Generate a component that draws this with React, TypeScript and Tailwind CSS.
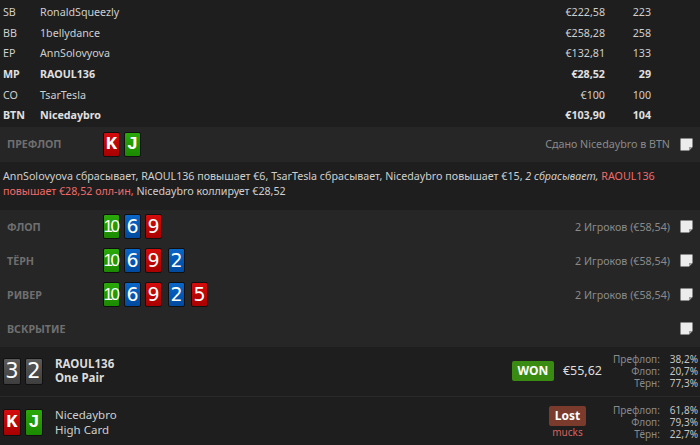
import React from "react";

type CardColor = "red" | "green" | "blue" | "gray";

const cardBg: Record<CardColor, string> = {
  red: "bg-gradient-to-b from-[#d40c0c] to-[#a80000]",
  green: "bg-gradient-to-b from-[#2aa80a] to-[#1b8a00]",
  blue: "bg-gradient-to-b from-[#0a66c8] to-[#004a9e]",
  gray: "bg-gradient-to-b from-[#5a5a5a] to-[#3e3e3e]",
};

const players = [
  { pos: "SB", name: "RonaldSqueezly", amount: "€222,58", bb: "223" },
  { pos: "BB", name: "1bellydance", amount: "€258,28", bb: "258" },
  { pos: "EP", name: "AnnSolovyova", amount: "€132,81", bb: "133" },
  { pos: "MP", name: "RAOUL136", amount: "€28,52", bb: "29", bold: true },
  { pos: "CO", name: "TsarTesla", amount: "€100", bb: "100" },
  { pos: "BTN", name: "Nicedaybro", amount: "€103,90", bb: "104", bold: true },
];

const Card = ({
  rank,
  color,
  big,
}: {
  rank: string;
  color: CardColor;
  big?: boolean;
}) => {
  const isLetter = /[A-Z]/.test(rank);
  return (
    <div
      className={`flex items-center justify-center rounded-[2px] border border-[#101010] text-white ${cardBg[color]} ${
        big ? "h-[27px] w-[18px]" : "h-[25px] w-[17px]"
      }`}
    >
      {isLetter ? (
        <span className="font-['Liberation_Mono',monospace] text-[19px] font-bold leading-none">
          {rank}
        </span>
      ) : rank === "10" ? (
        <span className="font-['Liberation_Sans',sans-serif] text-[17px] leading-none tracking-[-2.5px] -ml-[2px]">
          {rank}
        </span>
      ) : (
        <span
          className={`font-['DejaVu_Sans',sans-serif] leading-none ${
            big ? "text-[21px]" : "text-[19px]"
          }`}
        >
          {rank}
        </span>
      )}
    </div>
  );
};

const Check = () => (
  <svg width="13" height="13" viewBox="0 0 13 13" className="mr-[7px] ml-[10px] shrink-0">
    <path d="M0.5 0.5 H12.5 V9 L9 12.5 H0.5 Z" fill="#ececec" />
    <path d="M12.5 9 L9 12.5 V9 Z" fill="#9a9a9a" />
  </svg>
);

const StreetRow = ({
  label,
  cards,
  info,
}: {
  label: string;
  cards?: React.ReactNode;
  info?: string;
}) => (
  <div className="flex h-[34px] items-center">
    <div className="w-[103px] pl-[7px] font-bold text-[#6f6f6f]">{label}</div>
    <div className="flex flex-1 items-center">{cards}</div>
    {info && <span className="text-[#8a8a8a]">{info}</span>}
    <Check />
  </div>
);

const Board = ({ n }: { n: number }) => {
  const all: [string, CardColor][] = [
    ["10", "green"],
    ["6", "blue"],
    ["9", "red"],
    ["2", "blue"],
    ["5", "red"],
  ];
  return (
    <div className="flex items-center gap-[6px]">
      <div className="flex gap-[4px]">
        {all.slice(0, 3).map(([r, c]) => (
          <Card key={r} rank={r} color={c} />
        ))}
      </div>
      {all.slice(3, n).map(([r, c]) => (
        <Card key={r} rank={r} color={c} />
      ))}
    </div>
  );
};

const Stats = ({ values }: { values: string[] }) => (
  <div className="grid w-[87px] shrink-0 grid-cols-[1fr_auto] gap-x-[10px] pr-[8px] text-[10px] leading-[12px]">
    {["Префлоп:", "Флоп:", "Тёрн:"].map((l, i) => (
      <React.Fragment key={l}>
        <span className="text-right text-[#8a8a8a]">{l}</span>
        <span className="w-[27px] text-right text-[#c4c4c4]">{values[i]}</span>
      </React.Fragment>
    ))}
  </div>
);

export default function App() {
  return (
    <div className="h-[445px] w-[700px] overflow-hidden bg-[#1e1e1e] font-['Noto_Sans',sans-serif] text-[10.7px] text-[#cfcfcf]">
      <div className="pt-[2px]">
        {players.map((p) => (
          <div
            key={p.pos}
            className={`flex h-[20.6px] items-center ${p.bold ? "font-bold text-[#e0e0e0]" : ""}`}
          >
            <span className="w-[40px] pl-[3px]">{p.pos}</span>
            <span className="flex-1">{p.name}</span>
            <span className="w-[80px] text-right">{p.amount}</span>
            <span className="w-[47px] pr-[1px] text-right">{p.bb}</span>
            <span className="w-[48px]" />
          </div>
        ))}
      </div>

      <div className="mt-[1px] flex h-[35px] items-center bg-[#262626]">
        <div className="w-[103px] pl-[7px] font-bold text-[#6f6f6f]">ПРЕФЛОП</div>
        <div className="flex flex-1 gap-[4px]">
          <Card rank="K" color="red" />
          <Card rank="J" color="green" />
        </div>
        <span className="text-[#8a8a8a]">Сдано Nicedaybro в BTN</span>
        <Check />
      </div>

      <p className="h-[48px] px-[3px] pt-[7px] leading-[15px] text-[#cfcfcf]">
        AnnSolovyova сбрасывает, RAOUL136 повышает €6, TsarTesla сбрасывает, Nicedaybro повышает €15,{" "}
        <i>2 сбрасывает,</i>{" "}
        <span className="text-[#f06a6a]">RAOUL136 повышает €28,52 олл-ин,</span> Nicedaybro коллирует €28,52
      </p>

      <div className="bg-[#262626] pb-[1px]">
        <StreetRow label="ФЛОП" cards={<Board n={3} />} info="2 Игроков (€58,54)" />
        <StreetRow label="ТЁРН" cards={<Board n={4} />} info="2 Игроков (€58,54)" />
        <StreetRow label="РИВЕР" cards={<Board n={5} />} info="2 Игроков (€58,54)" />
        <StreetRow label="ВСКРЫТИЕ" />
      </div>

      <div className="flex h-[50px] items-center border-b border-[#2a2a2a] pl-[3px]">
        <div className="flex gap-[4px]">
          <Card rank="3" color="gray" big />
          <Card rank="2" color="gray" big />
        </div>
        <div className="ml-[12px] flex-1 text-[11.5px] font-bold leading-[14px] text-[#dcdcdc]">
          <div>RAOUL136</div>
          <div>One Pair</div>
        </div>
        <div className="mr-[9px] flex h-[20px] w-[42px] items-center justify-center rounded-[2px] bg-[#3a8b12] text-[12px] font-bold text-white">
          WON
        </div>
        <span className="mr-[11px] text-[12.5px] text-[#dedede]">€55,62</span>
        <Stats values={["38,2%", "20,7%", "77,3%"]} />
      </div>

      <div className="flex h-[51px] items-center pl-[3px]">
        <div className="flex gap-[4px]">
          <Card rank="K" color="red" big />
          <Card rank="J" color="green" big />
        </div>
        <div className="ml-[12px] flex-1 text-[11.5px] leading-[15px] text-[#cfcfcf]">
          <div>Nicedaybro</div>
          <div>High Card</div>
        </div>
        <div className="mr-[27px] flex flex-col items-center">
          <div className="flex h-[20px] w-[37px] items-center justify-center rounded-[2px] bg-[#7a3a2c] text-[12px] font-bold text-white">
            Lost
          </div>
          <span className="text-[10px] leading-[13px] text-[#d9625e]">mucks</span>
        </div>
        <Stats values={["61,8%", "79,3%", "22,7%"]} />
      </div>
    </div>
  );
}
